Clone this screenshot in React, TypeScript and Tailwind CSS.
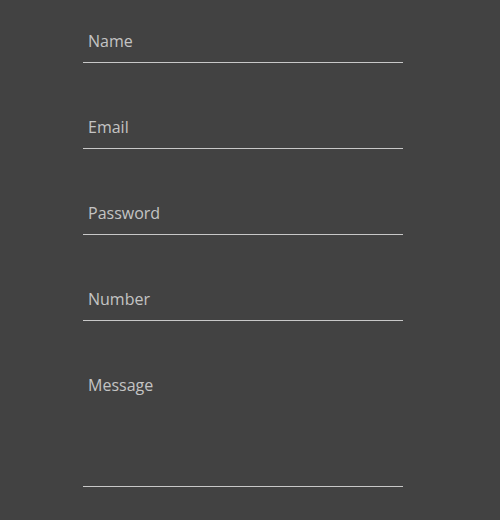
import React from "react";

export default function App() {
  const fields = [
    { label: "Name", type: "text" },
    { label: "Email", type: "email" },
    { label: "Password", type: "password" },
    { label: "Number", type: "number" },
  ];
  return (
    <div className="w-[500px] h-[520px] bg-[#424242] overflow-hidden" style={{ fontFamily: '"Open Sans", sans-serif' }}>
      <form className="ml-[83px] w-[320px] pt-[22px] flex flex-col gap-[45px]">
        {fields.map((f) => (
          <input
            key={f.label}
            type={f.type}
            placeholder={f.label}
            className="h-[41px] w-full bg-transparent border-b border-[#c8c8c8] pl-[5px] pb-[2px] text-[16px] text-[#c8c8c8] placeholder:text-[#c4c4c4] outline-none"
          />
        ))}
        <textarea
          placeholder="Message"
          className="h-[121px] w-full bg-transparent border-b border-[#c8c8c8] pl-[5px] pt-[7px] text-[16px] text-[#c8c8c8] placeholder:text-[#c4c4c4] outline-none resize-none"
        />
      </form>
    </div>
  );
}
